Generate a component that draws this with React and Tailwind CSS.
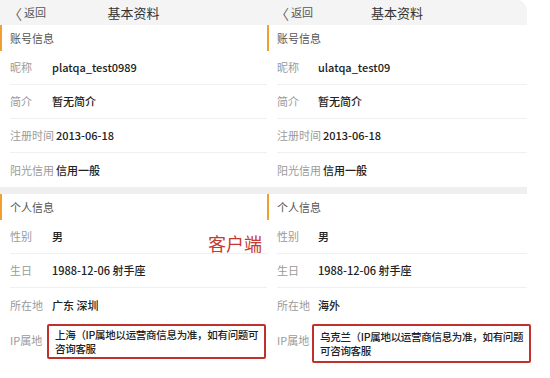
import React from "react"

const font = { fontFamily: '"Noto Sans CJK SC", "Noto Sans", sans-serif' }

function Row({ label, value, labelW, last }) {
  return (
    <div className={`flex items-center h-[34px] ${last ? "" : "border-b border-[#f0f0f0]"}`}>
      <div className={`${labelW} shrink-0 text-[11px] text-[#9a9a9a]`}>{label}</div>
      <div className="text-[11px] text-[#222] font-medium">{value}</div>
    </div>
  )
}

function SectionHead({ title }) {
  return (
    <div className="flex items-center h-[26px] border-l-2 border-[#f0a030] pl-[8px] text-[11px] text-[#555]">
      {title}
    </div>
  )
}

function Panel({ nick, location, ip1, ip2, labelW, boxShift, boxPad, className, rounded }) {
  return (
    <div className={`flex flex-col bg-white ${className}`}>
      <div className={`relative flex items-center h-[25px] bg-[#f4f4f4] ${rounded ? "rounded-tr-[10px]" : ""}`}>
        <div className="flex items-center pl-[8px] text-[11px] text-[#555]">
          <span className="text-[14px] leading-none mr-[2px] text-[#666]">〈</span>返回
        </div>
        <div className="absolute inset-0 flex items-center justify-center text-[13px] text-[#333] pointer-events-none">
          基本资料
        </div>
      </div>
      <SectionHead title="账号信息" />
      <div className="pl-[10px]">
        <Row label="昵称" value={nick} labelW={labelW} />
        <Row label="简介" value="暂无简介" labelW={labelW} />
        <Row label="注册时间" value="2013-06-18" labelW="w-auto pr-[2px]" />
        <Row label="阳光信用" value="信用一般" labelW="w-auto pr-[2px]" last />
      </div>
      <div className="h-[7px] bg-[#efefef]" />
      <SectionHead title="个人信息" />
      <div className="pl-[10px]">
        <Row label="性别" value="男" labelW={labelW} />
        <Row label="生日" value="1988-12-06 射手座" labelW={labelW} />
        <Row label="所在地" value={location} labelW={labelW} last />
        <div className="flex items-start pt-[2px] h-[44px]">
          <div className={`${labelW} shrink-0 text-[11px] text-[#9a9a9a] pt-[8px]`}>IP属地</div>
          <div className={`flex-1 ${boxShift} ${boxPad} mr-[3px] border-2 border-[#c0302c] rounded-[2px] px-[6px] text-[10.5px] leading-[14px] tracking-[-0.3px] text-[#222] font-medium`}>
            <div className="whitespace-nowrap">{ip1}</div>
            <div>{ip2}</div>
          </div>
        </div>
      </div>
    </div>
  )
}

export default function App() {
  return (
    <div className="relative w-[550px] h-[378px] bg-white overflow-hidden flex" style={font}>
      <Panel
        className="w-[267px]"
        nick="platqa_test0989"
        location="广东 深圳"
        ip1="上海（IP属地以运营商信息为准，如有问题可"
        ip2="咨询客服"
        labelW="w-[42px]"
        boxShift="-ml-[5px]"
        boxPad="py-[1.5px]"
      />
      <Panel
        className="w-[260px]"
        rounded
        nick="ulatqa_test09"
        location="海外"
        ip1="乌克兰（IP属地以运营商信息为准，如有问题"
        ip2="可咨询客服"
        labelW="w-[41px]"
        boxShift="-ml-[6px]"
        boxPad="py-[3.5px]"
      />
      <div className="absolute left-[208px] top-[230px] text-[18px] text-[#c33a33]">客户端</div>
    </div>
  )
}
